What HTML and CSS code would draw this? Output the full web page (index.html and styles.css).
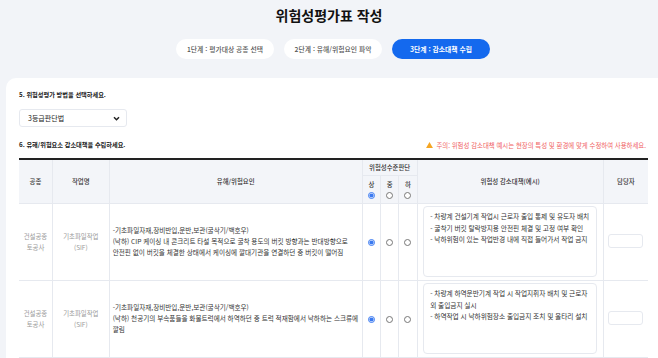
FILE: index.html
```html
<!DOCTYPE html>
<html lang="ko">
<head>
  <meta charset="UTF-8" />
  <meta name="viewport" content="width=device-width, initial-scale=1.0"/>
  <title>위험성평가표 작성</title>
  <link rel="stylesheet" href="styles.css">
</head>
<body>

  <h1 class="page-title">위험성평가표 작성</h1>

  <div class="steps">
    <a class="step">1단계 : 평가대상 공종 선택</a>
    <a class="step">2단계 : 유해/위험요인 파악</a>
    <a class="step active">3단계 : 감소대책 수립</a>
  </div>

  <div class="card">
    <h3 class="q-title">5. 위험성평가 방법을 선택하세요.</h3>
    <div class="select-box">
      <span>3등급판단법</span>
      <svg width="7" height="5" viewBox="0 0 8 6"><path d="M1 1.5 L4 4.5 L7 1.5" fill="none" stroke="#222" stroke-width="1.8"/></svg>
    </div>

    <div class="q-row">
      <h3 class="q-title">6. 유해/위험요소 감소대책을 수립하세요.</h3>
      <p class="notice">
        <svg width="7" height="6" viewBox="0 0 8 7"><path d="M4 0 L8 7 L0 7 Z" fill="#f5a623"/></svg>
        주의: 위험성 감소대책 예시는 현장의 특성 및 환경에 맞게 수정하여 사용하세요.
      </p>
    </div>

    <div class="table-wrap">
      <table class="risk-table">
        <colgroup>
          <col style="width:33px"><col style="width:56px"><col style="width:250px">
          <col style="width:18px"><col style="width:18px"><col style="width:18px">
          <col style="width:184px"><col style="width:44px">
        </colgroup>
        <thead>
          <tr class="head-top">
            <th rowspan="2">공종</th>
            <th rowspan="2">작업명</th>
            <th rowspan="2">유해/위험요인</th>
            <th colspan="3">위험성수준판단</th>
            <th rowspan="2">위험성 감소대책(예시)</th>
            <th rowspan="2">담당자</th>
          </tr>
          <tr class="head-sub">
            <th>상<br><input type="radio" name="h" checked></th>
            <th>중<br><input type="radio" name="h"></th>
            <th>하<br><input type="radio" name="h"></th>
          </tr>
        </thead>
        <tbody>
          <tr>
            <td class="muted">건설공종<br>토공사</td>
            <td class="muted">기초파일작업<br>(SIF)</td>
            <td class="hazard">-기초파일자재,장비반입,운반,보관(굴삭기/백호우)<br>(낙하) CIP 케이싱 내 콘크리트 타설 목적으로 굴착 용도의 버킷 방향과는 반대방향으로 안전핀 없이 버킷을 체결한 상태에서 케이싱에 깔대기관을 연결하던 중 버킷이 떨어짐</td>
            <td><input type="radio" name="r1" checked></td>
            <td><input type="radio" name="r1"></td>
            <td><input type="radio" name="r1"></td>
            <td><textarea>- 차량계 건설기계 작업시 근로자 출입 통제 및 유도자 배치
- 굴착기 버킷 탈락방지용 안전핀 체결 및 고정 여부 확인
- 낙하위험이 있는 작업반경 내에 직접 들어가서 작업 금지</textarea></td>
            <td><input type="text" class="owner"></td>
          </tr>
          <tr>
            <td class="muted">건설공종<br>토공사</td>
            <td class="muted">기초파일작업<br>(SIF)</td>
            <td class="hazard">-기초파일자재,장비반입,운반,보관(굴삭기/백호우)<br>(낙하) 천공기의 부속품들을 화물트럭에서 하역하던 중 트럭 적재함에서 낙하하는 스크류에 깔림</td>
            <td><input type="radio" name="r2" checked></td>
            <td><input type="radio" name="r2"></td>
            <td><input type="radio" name="r2"></td>
            <td><textarea>- 차량계 하역운반기계 작업 시 작업지휘자 배치 및 근로자 외 출입금지 실시
- 하역작업 시 낙하위험장소 출입금지 조치 및 울타리 설치</textarea></td>
            <td><input type="text" class="owner"></td>
          </tr>
          <tr>
            <td class="muted">건설공종<br>토공사</td>
            <td class="muted">기초파일작업<br>(SIF)</td>
            <td class="hazard">-기초파일자재,장비반입,운반,보관(굴삭기/백호우)<br>(충돌) 장비 이동 중 주변 근로자와 충돌</td>
            <td><input type="radio" name="r3" checked></td>
            <td><input type="radio" name="r3"></td>
            <td><input type="radio" name="r3"></td>
            <td><textarea>- 장비 이동 시 신호수 배치</textarea></td>
            <td><input type="text" class="owner"></td>
          </tr>
          <tr>
            <td class="muted">건설공종<br>토공사</td>
            <td class="muted">기초파일작업<br>(SIF)</td>
            <td class="hazard">-기초파일자재,장비반입,운반,보관(굴삭기/백호우)<br>(전도) 지반 침하로 인한 장비 전도</td>
            <td><input type="radio" name="r4" checked></td>
            <td><input type="radio" name="r4"></td>
            <td><input type="radio" name="r4"></td>
            <td><textarea>- 작업 전 지반 상태 확인</textarea></td>
            <td><input type="text" class="owner"></td>
          </tr>
        </tbody>
      </table>
    </div>
  </div>

</body>
</html>
```

FILE: styles.css
```css
* {
  margin: 0;
  padding: 0;
  box-sizing: border-box;
}

body {
  font-family: "Noto Sans CJK KR", "Noto Sans", sans-serif;
  background-color: #f2f4f8;
  color: #222;
  overflow: hidden;
}

.page-title {
  text-align: center;
  font-size: 14px;
  font-weight: 700;
  line-height: 18px;
  padding-top: 6px;
  color: #111;
}

.steps {
  display: flex;
  justify-content: center;
  gap: 10px;
  margin-top: 15px;
  padding-left: 8px;
}

.step {
  width: 98px;
  height: 20px;
  line-height: 20px;
  border-radius: 10px;
  background: #fff;
  color: #555;
  font-size: 6.8px;
  font-weight: 500;
  text-align: center;
  white-space: nowrap;
}

.step.active {
  background: #1469ee;
  color: #fff;
  font-weight: 700;
}

.card {
  margin: 19px 0 0 6px;
  background: #fff;
  border-radius: 10px 0 0 0;
  padding: 11px 10px 0 13px;
  height: 300px;
}

.q-title {
  font-size: 6.2px;
  font-weight: 700;
  line-height: 12px;
  color: #222;
}

.select-box {
  display: flex;
  justify-content: space-between;
  align-items: center;
  width: 108px;
  height: 18px;
  margin-top: 8px;
  padding: 0 6px 0 8px;
  border: 1px solid #e6e9ef;
  border-radius: 3px;
  font-size: 7px;
  color: #222;
}

.q-row {
  display: flex;
  justify-content: space-between;
  align-items: center;
  margin-top: 12px;
  padding-right: 2px;
}

.notice {
  font-size: 6.4px;
  color: #f0625f;
  display: flex;
  align-items: center;
  gap: 3px;
}

.table-wrap {
  margin-top: 7px;
  height: 200px;
  overflow-y: scroll;
}

.table-wrap::-webkit-scrollbar {
  width: 8px;
}

.table-wrap::-webkit-scrollbar-track {
  background: #fff;
  margin-top: 8px;
}

.table-wrap::-webkit-scrollbar-thumb {
  background: #8c8c8c;
  border-radius: 4px;
}

.risk-table {
  width: 100%;
  table-layout: fixed;
  border-collapse: collapse;
  border-top: 2px solid #222;
  font-size: 6.4px;
}

.risk-table th {
  background: #f3f5f9;
  font-weight: 500;
  color: #333;
  border: 1px solid #e6e9ef;
  border-top: none;
  text-align: center;
  vertical-align: middle;
}

.risk-table th:first-child,
.risk-table td:first-child {
  border-left: none;
}

.risk-table th:last-child,
.risk-table td:last-child {
  border-right: none;
}

.head-top th {
  height: 16px;
}

.head-sub th {
  height: 28px;
  line-height: 10px;
  padding-top: 2px;
}

.risk-table input[type="radio"] {
  width: 7px;
  height: 7px;
  margin: 0;
  accent-color: #3b7af0;
  vertical-align: middle;
}

.risk-table td {
  height: 77px;
  border: 1px solid #e6e9ef;
  text-align: center;
  vertical-align: middle;
  line-height: 11px;
}

.risk-table td.muted {
  color: #9a9a9a;
}

.risk-table td.hazard {
  text-align: left;
  padding: 0 2px 0 3px;
  color: #333;
  font-size: 6.6px;
  word-break: keep-all;
}

.risk-table textarea {
  display: block;
  width: 174px;
  height: 71px;
  margin: 0 auto;
  padding: 4px 5px 4px 6px;
  border: 1px solid #e6e9ef;
  border-radius: 4px;
  font-family: inherit;
  font-size: 6.7px;
  line-height: 11.5px;
  letter-spacing: -0.05px;
  color: #333;
  word-break: keep-all;
  resize: none;
  overflow: hidden;
}

.owner {
  width: 35px;
  height: 14px;
  border: 1px solid #e6e9ef;
  border-radius: 3px;
}
```
